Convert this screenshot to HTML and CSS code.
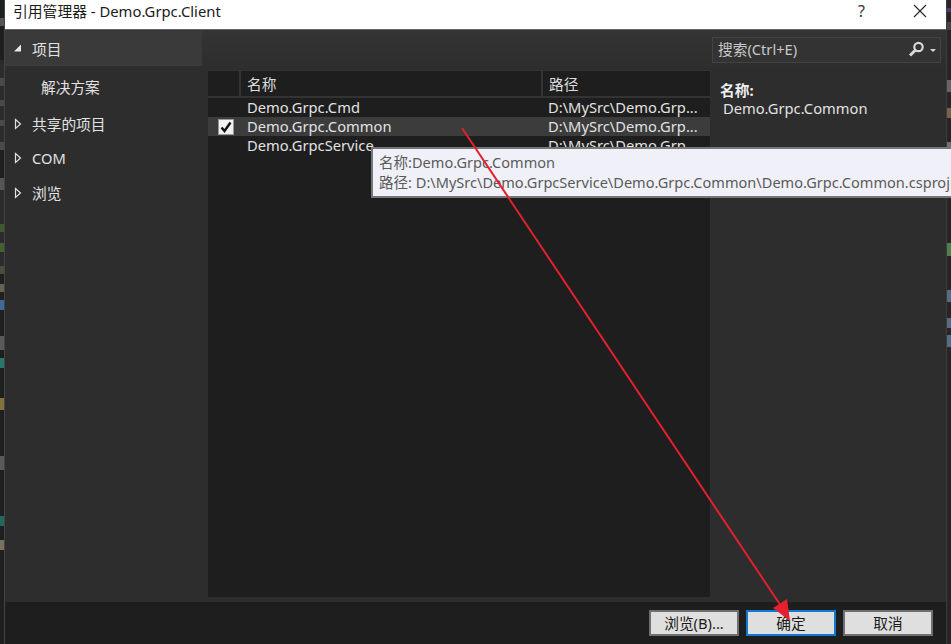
FILE: index.html
```html
<!DOCTYPE html>
<html lang="zh-CN">
<head>
<meta charset="utf-8">
<title>引用管理器 - Demo.Grpc.Client</title>
<link rel="stylesheet" href="styles.css">
</head>
<body>
<div class="desktop">
  <div class="behind-left"></div>
  <div class="window">
    <header class="titlebar">
      <span class="title">引用管理器 - Demo.Grpc.Client</span>
      <span class="title-help">?</span>
      <svg class="title-close" width="14" height="14" viewBox="0 0 14 14"><path d="M1 1L13 13M13 1L1 13" stroke="#222" stroke-width="1.1" fill="none"/></svg>
    </header>
    <main class="body">
      <nav class="sidebar">
        <div class="nav-item nav-selected"><svg class="tri" width="10" height="10" viewBox="0 0 10 10"><path d="M8 1.5V8.5H1Z" fill="#e8e8e8"/></svg><span>项目</span></div>
        <div class="nav-item nav-sub"><span>解决方案</span></div>
        <div class="nav-item"><svg class="tri" width="10" height="12" viewBox="0 0 10 12"><path d="M2.5 1.5L7.5 6L2.5 10.5Z" fill="none" stroke="#e0e0e0" stroke-width="1.2"/></svg><span>共享的项目</span></div>
        <div class="nav-item"><svg class="tri" width="10" height="12" viewBox="0 0 10 12"><path d="M2.5 1.5L7.5 6L2.5 10.5Z" fill="none" stroke="#e0e0e0" stroke-width="1.2"/></svg><span>COM</span></div>
        <div class="nav-item"><svg class="tri" width="10" height="12" viewBox="0 0 10 12"><path d="M2.5 1.5L7.5 6L2.5 10.5Z" fill="none" stroke="#e0e0e0" stroke-width="1.2"/></svg><span>浏览</span></div>
      </nav>
      <section class="list">
        <div class="list-head">
          <div class="h-check"></div>
          <div class="h-name">名称</div>
          <div class="h-path">路径</div>
        </div>
        <div class="row">
          <div class="c-check"></div><div class="c-name">Demo.Grpc.Cmd</div><div class="c-path">D:\MySrc\Demo.Grp...</div>
        </div>
        <div class="row row-selected">
          <div class="c-check"><span class="checkbox"><svg width="14" height="14" viewBox="0 0 14 14"><path d="M2.5 7.5L5.5 11L11.5 2.5" stroke="#111" stroke-width="2.4" fill="none"/></svg></span></div><div class="c-name">Demo.Grpc.Common</div><div class="c-path">D:\MySrc\Demo.Grp...</div>
        </div>
        <div class="row">
          <div class="c-check"></div><div class="c-name">Demo.GrpcService</div><div class="c-path">D:\MySrc\Demo.Grp...</div>
        </div>
      </section>
      <aside class="details">
        <div class="search">
          <span class="search-text">搜索(Ctrl+E)</span>
          <svg class="search-icon" width="17" height="16" viewBox="0 0 17 16"><circle cx="10.5" cy="6" r="4.2" fill="none" stroke="#d8d8d8" stroke-width="2.2"/><path d="M7.5 9L2 14.5" stroke="#d8d8d8" stroke-width="3"/></svg>
          <span class="search-caret"></span>
        </div>
        <div class="d-label">名称:</div>
        <div class="d-value">Demo.Grpc.Common</div>
      </aside>
    </main>
    <footer class="footer">
      <button class="btn">浏览(B)...</button>
      <button class="btn btn-default">确定</button>
      <button class="btn">取消</button>
    </footer>
  </div>
  <div class="behind-right"></div>
  <div class="tooltip">
    <div>名称:Demo.Grpc.Common</div>
    <div>路径: D:\MySrc\Demo.GrpcService\Demo.Grpc.Common\Demo.Grpc.Common.csproj</div>
  </div>
  <svg class="arrow" width="951" height="644" viewBox="0 0 951 644">
    <path d="M462 128L781 606" stroke="#e2202e" stroke-width="2" fill="none"/>
    <path d="M790 621L773 608L787 599Z" fill="#e2202e"/>
  </svg>
</div>
</body>
</html>
```
FILE: styles.css
```css
* { box-sizing: border-box; }
html, body { margin: 0; padding: 0; }
body {
  width: 951px;
  height: 644px;
  overflow: hidden;
  background: #1e1e1e;
  font-family: "Noto Sans", "Noto Sans CJK SC", sans-serif;
  font-size: 14.7px;
  color: #e2e2e2;
}
.desktop { position: relative; display: flex; width: 951px; height: 644px; overflow: hidden; }
.behind-left {
  width: 4px;
  flex: none;
  background: linear-gradient(to bottom,
    #1f1f1f 0 18px, #555 18px 26px, #1f1f1f 26px 60px, #2b2b2b 60px 78px, #4a4a4a 78px 86px, #2b2b2b 86px 100px,
    #4a4a4a 100px 106px, #2b2b2b 106px 120px, #4a4a4a 120px 126px, #2b2b2b 126px 142px, #4a4a4a 142px 150px, #1f1f1f 150px 178px,
    #555 178px 190px, #2b2b2b 190px 224px, #3f5a30 224px 232px, #2b2b2b 232px 243px, #465f30 243px 252px, #2b2b2b 252px 266px,
    #4c4c42 266px 274px, #1f1f1f 274px 284px, #6a6054 284px 292px, #1f1f1f 292px 300px, #3d6a94 300px 310px, #1f1f1f 310px 336px,
    #5a5a5a 336px 350px, #1f1f1f 350px 358px, #2a7668 358px 368px, #1f1f1f 368px 398px, #85703f 398px 410px, #1f1f1f 410px 456px,
    #5a5a5a 456px 470px, #1f1f1f 470px 516px, #25665f 516px 526px, #1f1f1f 526px 540px, #7c7060 540px 550px, #1f1f1f 550px);
}
.window {
  width: 943px;
  flex: none;
  display: flex;
  flex-direction: column;
  height: 644px;
  background: #2d2d2d;
  border-left: 1px solid #444;
  border-right: 1px solid #3c3c3c;
}
.titlebar {
  height: 30px;
  flex: none;
  display: flex;
  align-items: center;
  background: #fff;
  color: #1b1b1b;
  padding: 0 0 7px 8px;
  border-bottom: 1px solid #666;
}
.title { flex: 1; font-size: 14.8px; line-height: 22px; }
.title-help { font-size: 16px; color: #333; margin-right: 48px; }
.title-close { margin-right: 19px; }
.body { flex: 1; min-height: 0; display: flex; background: linear-gradient(to bottom, #343434, #2d2d2d 40px); }
.sidebar { width: 197px; flex: none; padding-top: 1px; }
.nav-item {
  height: 34.5px;
  display: flex;
  align-items: center;
  padding-left: 8px;
  gap: 9px;
}
.nav-selected { background: #3a3a3a; }
.nav-sub { padding: 0 0 0 36px; height: 41px; }
.tri { flex: none; }
.list {
  width: 502px;
  flex: none;
  margin: 40px 0 5px 6px;
  background: #1e1e1e;
  border-top: 1px solid #333;
}
.list-head {
  display: flex;
  height: 27px;
  border-bottom: 2px solid #333;
  color: #dcdcdc;
}
.h-check { width: 33px; border-right: 2px solid #333; }
.h-name { width: 302px; padding-left: 6px; border-right: 2px solid #333; line-height: 26px; }
.h-path { flex: 1; padding-left: 6px; line-height: 26px; }
.row { display: flex; height: 19px; align-items: center; line-height: 19px; white-space: nowrap; overflow: hidden; }
.row-selected { background: #3c3c3c; }
.c-check { flex: none; padding-left: 10px; width: 33px; display: flex; }
.checkbox {
  width: 16px; height: 16px;
  background: #f1f1f1;
  border: 1px solid #999;
  display: flex;
  align-items: center;
  justify-content: center;
}
.c-name { width: 302px; flex: none; padding-left: 6px; }
.c-path { flex: 1; padding-left: 5px; }
.details { flex: 1; min-width: 0; padding: 7px 5px 0 2px; }
.search {
  height: 26px;
  display: flex;
  align-items: center;
  background: #333;
  border: 1px solid #434343;
  padding: 0 0 0 5px;
  color: #c8c8c8;
}
.search-text { flex: 1; line-height: 20px; margin-top: -3px; }
.search-icon { margin-right: 5px; margin-top: -2px; }
.search-caret {
  width: 0; height: 0;
  border-style: solid;
  border-width: 3px 3.5px 0 3.5px;
  border-color: #d8d8d8 transparent transparent transparent;
  margin-right: 4px;
}
.d-label { margin: 17px 0 0 8px; font-weight: 700; line-height: 20px; color: #eee; }
.d-value { margin: -2px 0 0 11px; line-height: 20px; }
.footer {
  height: 42px;
  flex: none;
  display: flex;
  justify-content: flex-end;
  gap: 7px;
  padding: 8px 13px 0 0;
  background: #1e1e1e;
}
.btn {
  width: 90px;
  height: 26px;
  background: #dfdfdf;
  border: 2px solid #6f6f6f;
  color: #1a1a1a;
  font: inherit;
  padding: 0;
  line-height: 20px;
}
.btn-default { border-color: #0f78d4; }
.behind-right {
  flex: 1;
  background: linear-gradient(to bottom,
    #262626 0 8px, #463f75 8px 12px, #262626 12px 22px, #444 22px 30px, #262626 30px 80px, #666 80px 92px, #262626 92px 108px,
    #74654a 108px 118px, #262626 118px 142px, #707070 142px 150px, #262626 150px 243px, #4b8050 243px 256px, #262626 256px 290px,
    #556c85 290px 302px, #262626 302px 318px, #556c85 318px 328px, #262626 328px 335px, #556c85 335px 347px, #262626 347px);
}
.tooltip {
  position: absolute;
  left: 371px;
  top: 147px;
  width: 620px;
  height: 51px;
  padding: 3px 0 0 6px;
  background: #f0f1f8;
  border: 2px solid #767676;
  border-right: 0;
  color: #5a5a5a;
  font-size: 14.55px;
  line-height: 20px;
  white-space: nowrap;
}
.arrow { position: absolute; left: 0; top: 0; pointer-events: none; }
```
